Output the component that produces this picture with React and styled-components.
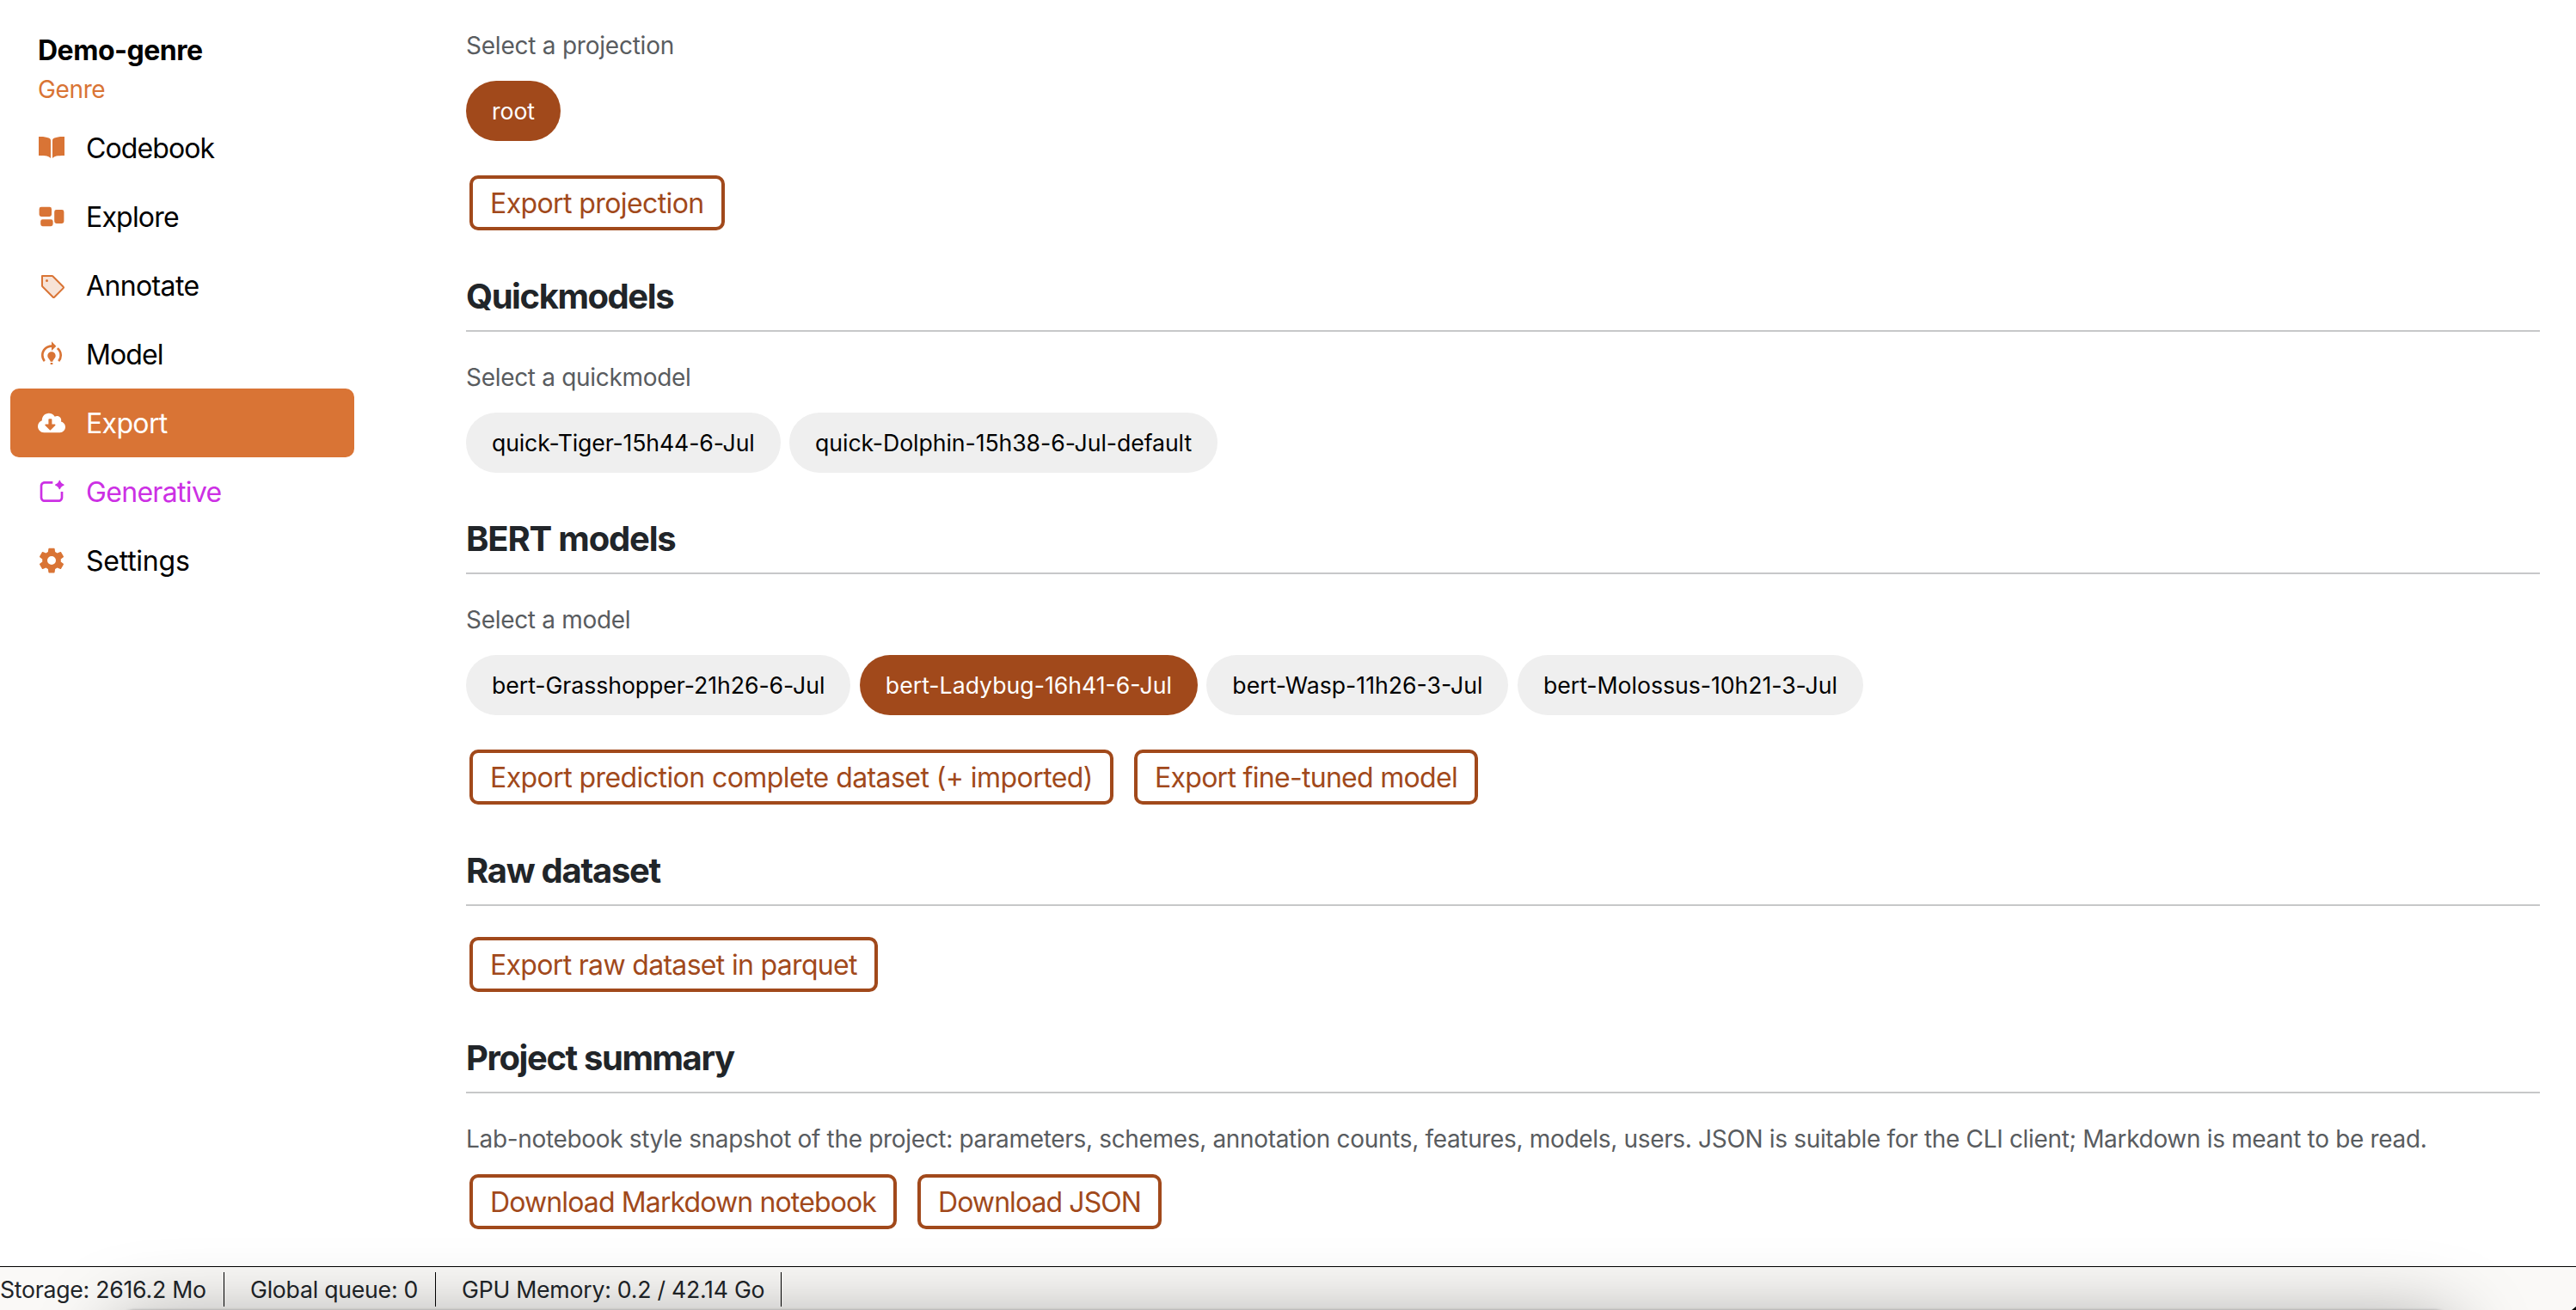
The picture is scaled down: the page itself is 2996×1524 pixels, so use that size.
import React from 'react';
import styled, { createGlobalStyle } from 'styled-components';
import { IoBookSharp, IoSettingsSharp } from 'react-icons/io5';
import { HiMiniRectangleGroup } from 'react-icons/hi2';
import { PiTagDuotone } from 'react-icons/pi';
import { MdModelTraining } from 'react-icons/md';
import { FaCloudDownloadAlt } from 'react-icons/fa';
import { RiAiGenerate } from 'react-icons/ri';

const color = {
  orange: '#d97435',
  brown: '#a1491b',
  magenta: '#cc30e4',
  ink: '#212529',
  muted: '#595c5f',
  rule: '#c7c8c9',
  chip: '#efefef',
};

const GlobalStyle = createGlobalStyle`
  *, *::before, *::after { box-sizing: border-box; }
  body {
    margin: 0;
    background: #fff;
    color: ${color.ink};
    font-family: Inter, "Liberation Sans", sans-serif;
  }
`;

const Page = styled.div`
  position: relative;
  display: flex;
  flex-direction: column;
  height: 1524px;
  overflow: hidden;
`;

const Body = styled.div`
  display: flex;
  flex: 1;
  min-height: 0;
`;

const Sidebar = styled.aside`
  flex: none;
  width: 542px;
  padding: 35px 0 0 12px;
`;

const ProjectName = styled.div`
  padding-left: 32px;
  font-size: 32px;
  font-weight: 700;
  line-height: 48px;
  letter-spacing: -0.49px;
  color: #000;
`;

const SchemeName = styled.div`
  padding-left: 32px;
  margin-bottom: 7px;
  font-size: 28px;
  line-height: 42px;
  letter-spacing: -0.37px;
  color: ${color.orange};
`;

const NavItem = styled.a`
  display: flex;
  align-items: center;
  gap: 24px;
  width: 400px;
  height: 80px;
  padding-left: 32px;
  border-radius: 10px;
  font-size: 32px;
  letter-spacing: ${(p) => p.$track}px;
  color: ${(p) => (p.$active ? '#fff' : p.$accent || '#000')};
  background: ${(p) => (p.$active ? color.orange : 'transparent')};

  svg {
    flex: none;
    width: 32px;
    height: 32px;
    color: ${(p) => (p.$active ? '#fff' : p.$accent || color.orange)};
  }
`;

const Main = styled.main`
  flex: 1;
  min-width: 0;
  padding: 32px 42px 0 0;
`;

const Section = styled.section`
  margin-bottom: 52px;
`;

const Heading = styled.h4`
  margin: 0;
  padding: 1px 0 15px;
  border-bottom: 2px solid ${color.rule};
  font-size: 40px;
  font-weight: 700;
  line-height: 48px;
  letter-spacing: ${(p) => p.$track}px;
`;

const Hint = styled.p`
  margin: ${(p) => (p.$first ? 0 : 32)}px 0 20px;
  font-size: 28px;
  line-height: 42px;
  letter-spacing: ${(p) => p.$track}px;
  white-space: nowrap;
  color: ${color.muted};
`;

const Chips = styled.div`
  display: flex;
  gap: 10.5px;
`;

const Chip = styled.button`
  height: 70px;
  padding: 0 30px;
  border: 0;
  border-radius: 35px;
  font: 400 26.67px Inter, "Liberation Sans", sans-serif;
  letter-spacing: ${(p) => p.$track}px;
  white-space: nowrap;
  color: ${(p) => (p.$selected ? '#fff' : '#000')};
  background: ${(p) => (p.$selected ? color.brown : color.chip)};
`;

const Actions = styled.div`
  display: flex;
  gap: 24px;
  margin-top: ${(p) => p.$top}px;
  padding-left: 4px;
`;

const ActionButton = styled.button`
  height: 64px;
  padding: 0 20px;
  border: 4px solid ${color.brown};
  border-radius: 10px;
  background: #fff;
  font: 400 32px Inter, "Liberation Sans", sans-serif;
  letter-spacing: ${(p) => p.$track}px;
  white-space: nowrap;
  color: ${color.brown};
`;

const StatusBar = styled.footer`
  display: flex;
  flex: none;
  height: 51px;
  padding-top: 6px;
  border-top: 1px solid #000;
  background: #faf9f7;
`;

const Status = styled.div`
  width: ${(p) => p.$width}px;
  height: 40px;
  padding-left: ${(p) => p.$inset}px;
  border-right: 1px solid #000;
  font-size: 26.67px;
  line-height: 41px;
  letter-spacing: ${(p) => p.$track}px;
  white-space: nowrap;
`;

const WindowShadow = styled.div`
  position: absolute;
  top: 1524px;
  left: 136px;
  width: 2716px;
  height: 600px;
  border-radius: 20px;
  box-shadow: 0 17px 92px rgba(0, 0, 0, 0.4), 0 0 3px rgba(0, 0, 0, 0.35);
  pointer-events: none;
`;

const ScreenCorner = styled.div`
  position: absolute;
  right: 0;
  bottom: 0;
  width: 5px;
  height: 4px;
  background: #000;
  clip-path: polygon(100% 0, 100% 100%, 0 100%);
`;

const nav = [
  { label: 'Codebook', Icon: IoBookSharp, track: -0.88 },
  { label: 'Explore', Icon: HiMiniRectangleGroup, track: -0.8 },
  { label: 'Annotate', Icon: PiTagDuotone, track: -0.62 },
  { label: 'Model', Icon: MdModelTraining, track: -0.9 },
  { label: 'Export', Icon: FaCloudDownloadAlt, track: -0.65, active: true },
  { label: 'Generative', Icon: RiAiGenerate, track: -0.68, accent: color.magenta },
  { label: 'Settings', Icon: IoSettingsSharp, track: -0.25 },
];

const sections = [
  {
    hint: ['Select a projection', -0.23],
    chips: [['root', -0.08, true]],
    actions: [['Export projection', -0.6]],
  },
  {
    title: ['Quickmodels', -1.43],
    hint: ['Select a quickmodel', -0.31],
    chips: [
      ['quick-Tiger-15h44-6-Jul', -0.14],
      ['quick-Dolphin-15h38-6-Jul-default', -0.08],
    ],
  },
  {
    title: ['BERT models', -1.18],
    hint: ['Select a model', -0.31],
    chips: [
      ['bert-Grasshopper-21h26-6-Jul', -0.06],
      ['bert-Ladybug-16h41-6-Jul', 0, true],
      ['bert-Wasp-11h26-3-Jul', 0],
      ['bert-Molossus-10h21-3-Jul', -0.04],
    ],
    actions: [
      ['Export prediction complete dataset (+ imported)', -0.57],
      ['Export fine-tuned model', -0.7],
    ],
  },
  {
    title: ['Raw dataset', -1.3],
    actions: [['Export raw dataset in parquet', -0.68]],
  },
  {
    title: ['Project summary', -1.4],
    hint: [
      'Lab-notebook style snapshot of the project: parameters, schemes, annotation counts, features, models, users. JSON is suitable for the CLI client; Markdown is meant to be read.',
      -0.33,
    ],
    actions: [
      ['Download Markdown notebook', -0.87],
      ['Download JSON', -0.92],
    ],
  },
];

const actionsOffset = ({ chips, hint }) => (chips ? 40 : hint ? 0 : 36);

export default function App() {
  return (
    <Page>
      <GlobalStyle />
      <Body>
        <Sidebar>
          <ProjectName>Demo-genre</ProjectName>
          <SchemeName>Genre</SchemeName>
          <nav>
            {nav.map(({ label, Icon, track, active, accent }) => (
              <NavItem key={label} $track={track} $active={active} $accent={accent}>
                <Icon />
                {label}
              </NavItem>
            ))}
          </nav>
        </Sidebar>
        <Main>
          {sections.map((s, i) => (
            <Section key={i}>
              {s.title && <Heading $track={s.title[1]}>{s.title[0]}</Heading>}
              {s.hint && (
                <Hint $first={!s.title} $track={s.hint[1]}>
                  {s.hint[0]}
                </Hint>
              )}
              {s.chips && (
                <Chips>
                  {s.chips.map(([label, track, selected]) => (
                    <Chip key={label} $track={track} $selected={selected}>
                      {label}
                    </Chip>
                  ))}
                </Chips>
              )}
              {s.actions && (
                <Actions $top={actionsOffset(s)}>
                  {s.actions.map(([label, track]) => (
                    <ActionButton key={label} $track={track}>
                      {label}
                    </ActionButton>
                  ))}
                </Actions>
              )}
            </Section>
          ))}
        </Main>
      </Body>
      <StatusBar>
        <Status $width={261} $inset={0} $track={-0.26}>Storage: 2616.2 Mo</Status>
        <Status $width={246} $inset={30} $track={-0.24}>Global queue: 0</Status>
        <Status $width={402} $inset={30} $track={-0.25}>GPU Memory: 0.2 / 42.14 Go</Status>
      </StatusBar>
      <WindowShadow />
      <ScreenCorner />
    </Page>
  );
}
